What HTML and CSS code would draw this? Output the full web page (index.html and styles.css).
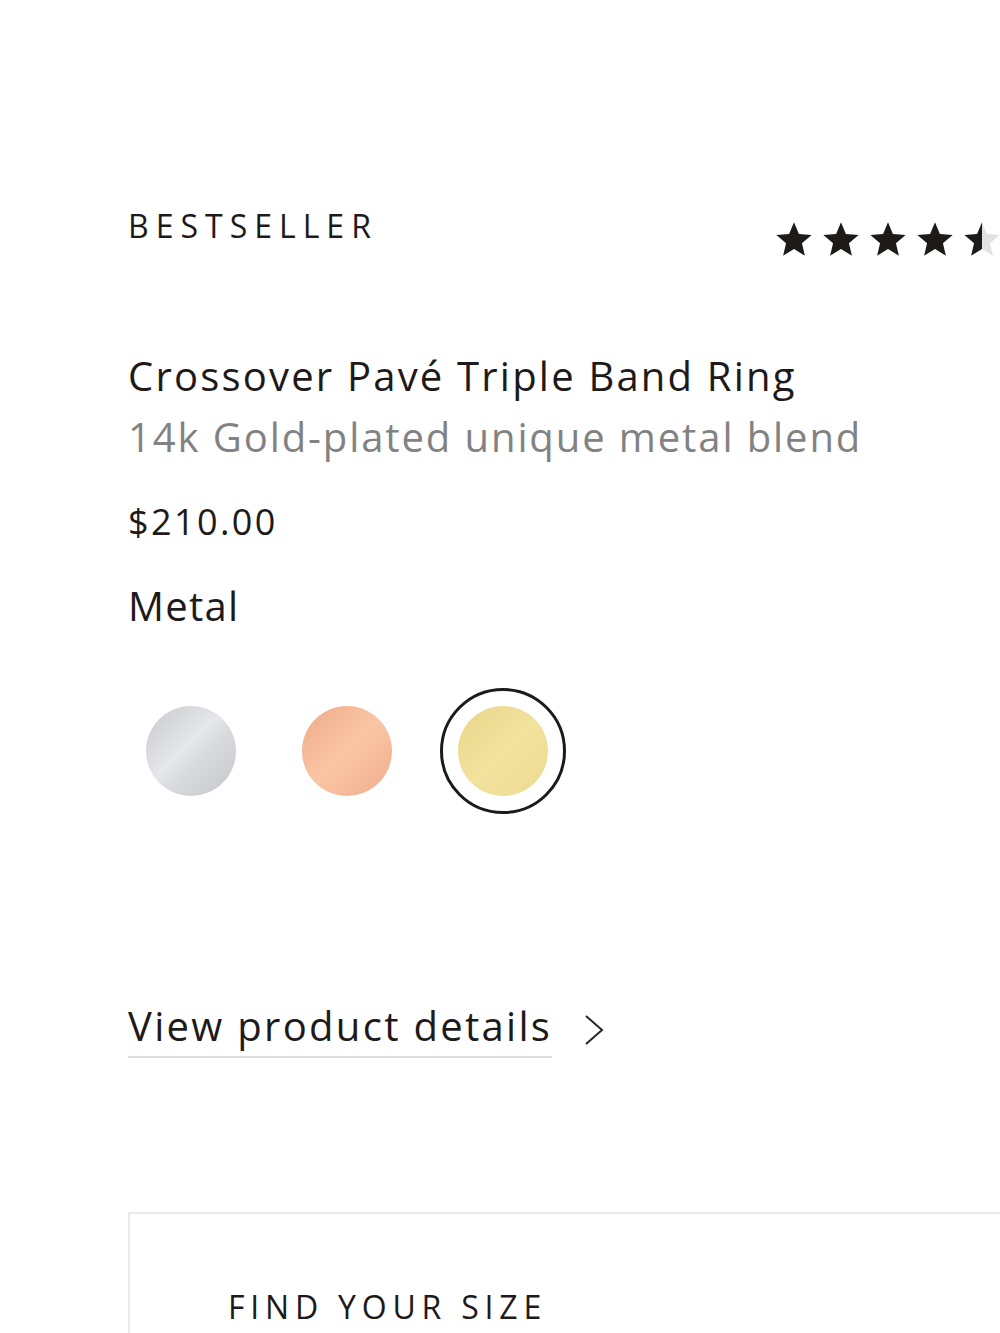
FILE: index.html
```html
<!DOCTYPE html>
<html>
<head>
    <link rel="stylesheet" href="styles.css">
</head>
<body>
    <div class="product">
        <div class="top">
            <span class="tag">BESTSELLER</span>
            <div class="stars">
                <svg class="star" viewBox="0.5 0.5 23 22"><path d="M12 .6L15.17 8.23 23.41 8.89 17.14 14.27 19.05 22.31 12 18 4.95 22.31 6.86 14.27 .59 8.89 8.83 8.23Z" fill="#1e1a17"/></svg>
                <svg class="star" viewBox="0.5 0.5 23 22"><path d="M12 .6L15.17 8.23 23.41 8.89 17.14 14.27 19.05 22.31 12 18 4.95 22.31 6.86 14.27 .59 8.89 8.83 8.23Z" fill="#1e1a17"/></svg>
                <svg class="star" viewBox="0.5 0.5 23 22"><path d="M12 .6L15.17 8.23 23.41 8.89 17.14 14.27 19.05 22.31 12 18 4.95 22.31 6.86 14.27 .59 8.89 8.83 8.23Z" fill="#1e1a17"/></svg>
                <svg class="star" viewBox="0.5 0.5 23 22"><path d="M12 .6L15.17 8.23 23.41 8.89 17.14 14.27 19.05 22.31 12 18 4.95 22.31 6.86 14.27 .59 8.89 8.83 8.23Z" fill="#1e1a17"/></svg>
                <svg class="star" viewBox="0.5 0.5 23 22">
                    <defs>
                        <linearGradient id="half" x1="0" x2="1" y1="0" y2="0">
                            <stop offset="0.5" stop-color="#1e1a17"/>
                            <stop offset="0.5" stop-color="#e2e2e2"/>
                        </linearGradient>
                    </defs>
                    <path d="M12 .6L15.17 8.23 23.41 8.89 17.14 14.27 19.05 22.31 12 18 4.95 22.31 6.86 14.27 .59 8.89 8.83 8.23Z" fill="url(#half)"/>
                </svg>
            </div>
        </div>

        <h1 class="title">Crossover Pavé Triple Band Ring</h1>
        <p class="subtitle">14k Gold-plated unique metal blend</p>
        <p class="price">$210.00</p>
        <p class="lbl">Metal</p>

        <div class="swatches">
            <div class="swatch"><span class="dot silver"></span></div>
            <div class="swatch"><span class="dot rose"></span></div>
            <div class="swatch selected"><span class="dot gold"></span></div>
        </div>

        <div class="details">
            <a class="details-link" href="#">View product details</a>
            <svg class="chevron" viewBox="0 0 22 32"><path d="M3 2l16 14L3 30" fill="none" stroke="#2a2624" stroke-width="2"/></svg>
        </div>

        <div class="size-box">
            <span class="size-title">FIND YOUR SIZE</span>
        </div>
    </div>
</body>
</html>
```

FILE: styles.css
```css
body
{
    margin: 0;
    overflow: hidden;
    background: #fff;
    color: #1e1a19;
    font-family: "Open Sans", Lato, sans-serif;
}
.product
{
    padding-left: 128px;
    width: 1100px;
}
.top
{
    display: flex;
    align-items: flex-start;
    width: 872px;
    height: 32px;
    margin-top: 210px;
}
.tag
{
    font-size: 32px;
    line-height: 32px;
    letter-spacing: 7px;
}
.stars
{
    display: flex;
    gap: 11px;
    margin-left: auto;
    margin-top: 12px;
}
.star
{
    width: 36px;
    height: 34px;
    display: block;
}
.title
{
    margin: 114px 0 0 0;
    font-size: 40px;
    line-height: 40px;
    font-weight: 400;
    letter-spacing: 2.2px;
}
.subtitle
{
    margin: 21px 0 0 0;
    font-size: 40px;
    line-height: 40px;
    color: #828282;
    letter-spacing: 1.9px;
}
.price
{
    margin: 47px 0 0 0;
    font-size: 36px;
    line-height: 36px;
    letter-spacing: 2.4px;
}
.lbl
{
    margin: 46px 0 0 0;
    font-size: 40px;
    line-height: 40px;
    letter-spacing: 1.3px;
}
.swatches
{
    display: flex;
    gap: 30px;
    margin-top: 62px;
}
.swatch
{
    width: 126px;
    height: 126px;
    box-sizing: border-box;
    border-radius: 50%;
    display: flex;
    align-items: center;
    justify-content: center;
}
.swatch.selected
{
    border: 3px solid #1e1a19;
}
.dot
{
    width: 90px;
    height: 90px;
    border-radius: 50%;
    display: block;
}
.silver
{
    background: linear-gradient(135deg, #c6c8cc 0%, #e6e7ea 45%, #d9dadd 60%, #c4c6ca 100%);
}
.rose
{
    background: linear-gradient(135deg, #eeab89 0%, #fac5a4 50%, #f6bb9a 70%, #eeb08e 100%);
}
.gold
{
    background: linear-gradient(135deg, #e8d586 0%, #f1e29e 50%, #ecdb92 100%);
}
.details
{
    display: flex;
    align-items: flex-start;
    margin-top: 192px;
}
.details-link
{
    color: #1e1a19;
    text-decoration: none;
    font-size: 40px;
    line-height: 40px;
    letter-spacing: 2.3px;
    padding-bottom: 10px;
    border-bottom: 2px solid #dedede;
}
.chevron
{
    width: 22px;
    height: 32px;
    margin-left: 31px;
    margin-top: 8px;
}
.size-box
{
    margin-top: 154px;
    width: 1000px;
    height: 200px;
    border: 2px solid #e8e8e8;
    padding: 77px 0 0 98px;
}
.size-title
{
    font-size: 32px;
    line-height: 32px;
    letter-spacing: 5.8px;
}
```
